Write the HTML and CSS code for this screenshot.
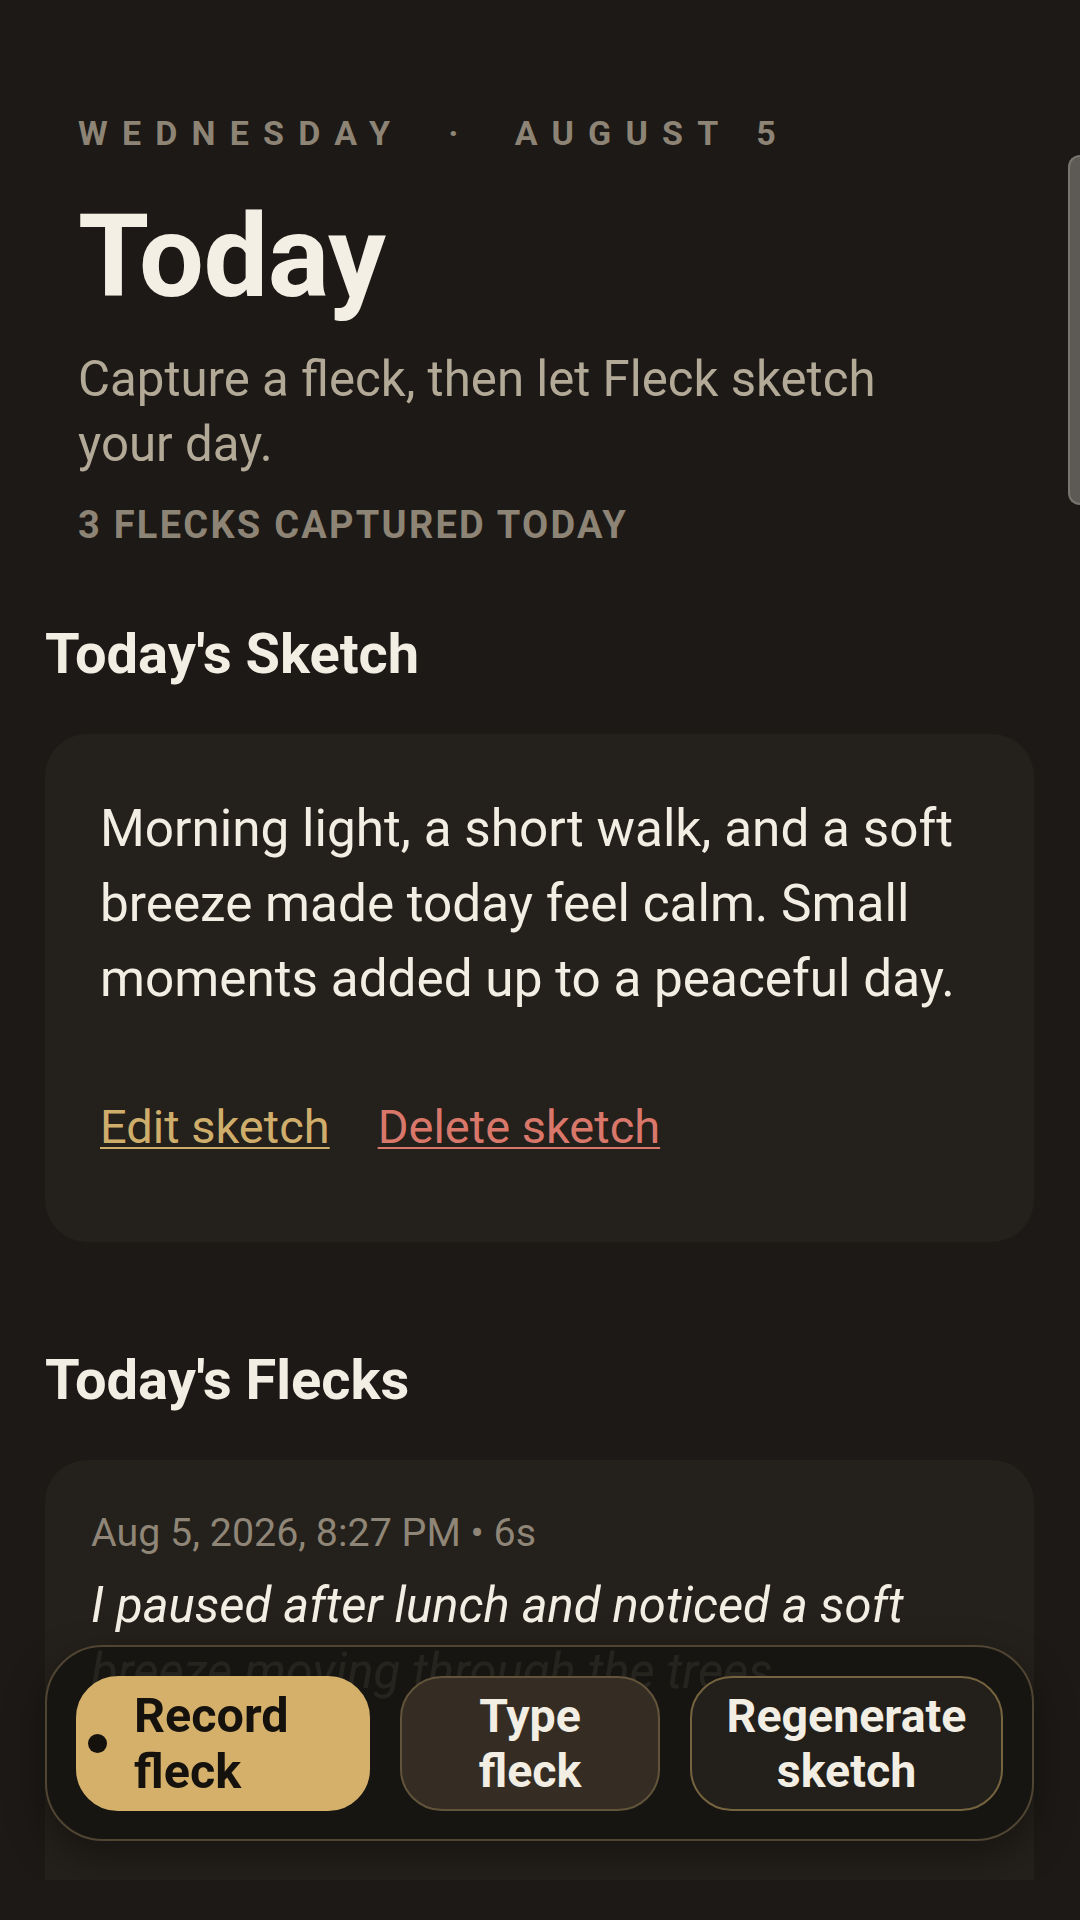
FILE: index.html
```html
<!DOCTYPE html>
<html lang="en">
<head>
<meta charset="utf-8">
<title>Fleck – Today</title>
<link rel="stylesheet" href="styles.css">
</head>
<body>
<div class="screen">
  <main class="scroll">
    <header class="hero">
      <p class="eyebrow">WEDNESDAY<span class="sep">·</span>AUGUST 5</p>
      <h1 class="title">Today</h1>
      <p class="subtitle">Capture a fleck, then let Fleck sketch your day.</p>
      <p class="count">3 FLECKS CAPTURED TODAY</p>
    </header>

    <section class="section section-sketch">
      <h2 class="section-title">Today's Sketch</h2>
      <div class="card sketch-card">
        <p class="sketch-text">Morning light, a short walk, and a soft breeze made today feel calm. Small moments added up to a peaceful day.</p>
        <div class="sketch-actions">
          <a class="link link-edit" href="#">Edit sketch</a>
          <a class="link link-delete" href="#">Delete sketch</a>
        </div>
      </div>
    </section>

    <section class="section section-flecks">
      <h2 class="section-title">Today's Flecks</h2>
      <article class="card fleck-card">
        <p class="fleck-meta">Aug 5, 2026, 8:27 PM • 6s</p>
        <p class="fleck-text">I paused after lunch and noticed a soft breeze moving through the trees.</p>
      </article>
    </section>

    <div class="scroll-thumb"></div>

    <nav class="action-bar">
      <button class="btn btn-record"><span class="rec-dot"></span><span class="btn-label">Record fleck</span></button>
      <button class="btn btn-type">Type fleck</button>
      <button class="btn btn-regen">Regenerate sketch</button>
    </nav>
  </main>
  <div class="system-nav"></div>
</div>
</body>
</html>
```

FILE: styles.css
```css
* {
  box-sizing: border-box;
}

html, body {
  margin: 0;
  padding: 0;
  background: #1c1916;
}

body {
  font-family: Roboto, "Noto Sans", "Liberation Sans", sans-serif;
  color: #f2eee3;
  width: 1080px;
  height: 1920px;
  overflow: hidden;
}

p, h1, h2 {
  margin: 0;
}

.screen {
  display: flex;
  flex-direction: column;
  height: 1920px;
}

.scroll {
  position: relative;
  flex: 1;
  overflow: hidden;
  padding: 115.4px 46px 0 45px;
}

/* ---------- hero ---------- */
.hero {
  padding-left: 33px;
}

.eyebrow {
  font-size: 34px;
  line-height: 36px;
  font-weight: 700;
  letter-spacing: 14.2px;
  word-spacing: 2px;
  color: #8d8475;
  white-space: nowrap;
}

.sep {
  padding: 0 42px 0 44px;
}

.title {
  margin-top: 41px;
  font-size: 115px;
  line-height: 130px;
  font-weight: 700;
  color: #f3efe4;
  letter-spacing: -0.5px;
}

.subtitle {
  margin-top: 25px;
  max-width: 860px;
  font-size: 49.2px;
  line-height: 64.3px;
  color: #b3a997;
}

.count {
  margin-top: 26.7px;
  font-size: 38px;
  line-height: 44px;
  font-weight: 700;
  letter-spacing: 2.25px;
  color: #8d8475;
}

/* ---------- sections ---------- */
.section-title {
  font-size: 56px;
  line-height: 68px;
  font-weight: 700;
  color: #f2eee3;
}

.section-sketch {
  margin-top: 73px;
}

.section-flecks {
  margin-top: 104.5px;
}

.card {
  background: #24201b;
  border-radius: 42px;
}

.sketch-card {
  margin-top: 46px;
  padding: 57px 55px 87px 55px;
}

.sketch-text {
  font-size: 51.3px;
  line-height: 75.3px;
  color: #f2eee3;
}

.sketch-actions {
  margin-top: 82px;
  display: flex;
  gap: 48px;
  font-size: 47px;
  line-height: 56px;
}

.link {
  text-decoration: underline;
  text-decoration-thickness: 2px;
  text-underline-offset: 4px;
}

.link-edit {
  color: #cfad6b;
}

.link-delete {
  color: #d9776b;
}

.fleck-card {
  margin-top: 45.5px;
  padding: 47.8px 46px 200px 46px;
  border-bottom-left-radius: 0;
  border-bottom-right-radius: 0;
}

.fleck-meta {
  font-size: 39.4px;
  line-height: 52px;
  color: #8f8677;
}

.fleck-text {
  margin-top: 13.7px;
  font-size: 49px;
  line-height: 66px;
  font-style: italic;
  color: #f2eee3;
}

/* ---------- overlays ---------- */
.scroll-thumb {
  position: absolute;
  right: 0;
  top: 155px;
  width: 12px;
  height: 350px;
  background: #5d5a56;
  border: 2px solid #78746e;
  border-right: none;
  border-radius: 12px 0 0 12px;
}

.action-bar {
  position: absolute;
  left: 45px;
  right: 46px;
  bottom: 39px;
  display: grid;
  grid-template-columns: 294fr 260fr 313fr;
  gap: 30px;
  padding: 29px 29px 28px 29px;
  background: rgba(22, 20, 16, 0.93);
  border: 2px solid #504533;
  border-radius: 58px;
  box-shadow: 0 16px 40px rgba(0, 0, 0, 0.35);
}

.btn {
  display: flex;
  align-items: center;
  justify-content: center;
  min-height: 135px;
  padding: 0 30px;
  border-radius: 42px;
  border: 2px solid transparent;
  font-family: Roboto, "Noto Sans", "Liberation Sans", sans-serif;
  font-size: 46.5px;
  line-height: 54.5px;
  font-weight: 700;
  text-align: center;
  color: #f2eee3;
}

.btn-record {
  justify-content: flex-start;
  gap: 27px;
  padding: 0 18px 0 10px;
  font-size: 48.5px;
  line-height: 56px;
  background: #d4b06a;
  border-color: #d4b06a;
  color: #15110d;
  text-align: left;
}

.rec-dot {
  flex: none;
  width: 19px;
  height: 19px;
  border-radius: 50%;
  background: #15110d;
}

.btn-label {
  flex: 1;
}

.btn-type {
  background: #352d24;
  border-color: #62543a;
}

.btn-regen {
  background: #231f1a;
  border-color: #75643f;
}

.system-nav {
  flex: none;
  height: 40px;
  background: #1c1916;
}
```
